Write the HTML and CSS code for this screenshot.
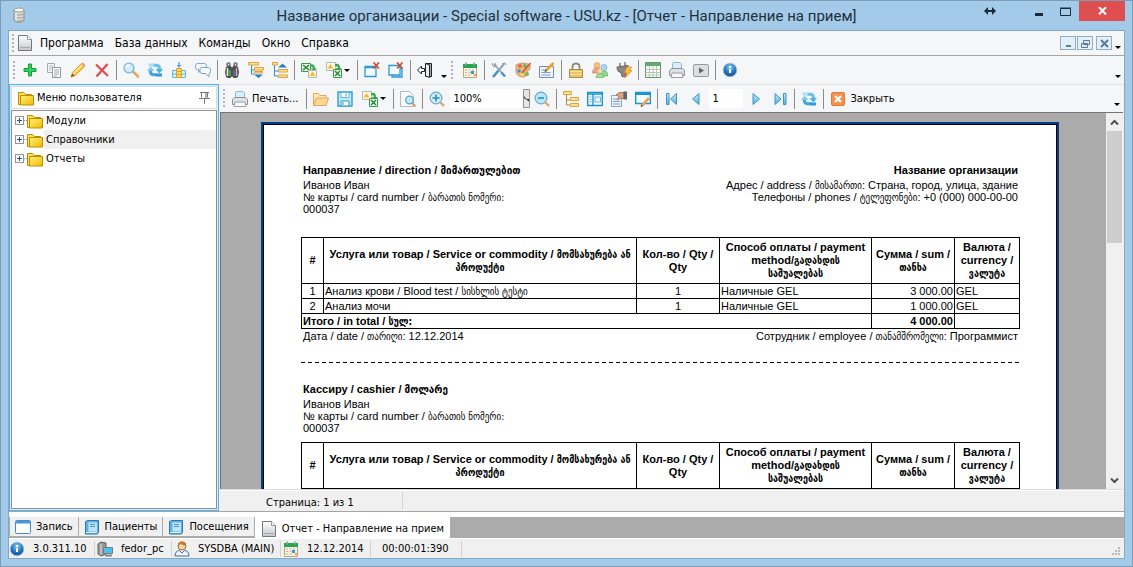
FILE: index.html
```html
<!DOCTYPE html>
<html lang="ru">
<head>
<meta charset="utf-8">
<title>Название организации - Special software - USU.kz</title>
<link rel="stylesheet" href="styles.css">
</head>
<body>
<svg class="defs" aria-hidden="true">
  <defs>
    <linearGradient id="g-gold" x1="0" y1="0" x2="1" y2="1"><stop offset="0" stop-color="#fff27a"/><stop offset="1" stop-color="#f2b800"/></linearGradient>
    <linearGradient id="g-blue" x1="0" y1="0" x2="0" y2="1"><stop offset="0" stop-color="#c5ecfb"/><stop offset="1" stop-color="#4db4e2"/></linearGradient>
    <radialGradient id="g-ball" cx=".5" cy=".3" r=".7"><stop offset="0" stop-color="#8fd0f5"/><stop offset=".5" stop-color="#2d83c9"/><stop offset="1" stop-color="#0c4a8c"/></radialGradient>
    <linearGradient id="g-gray" x1="0" y1="0" x2="0" y2="1"><stop offset="0" stop-color="#fff"/><stop offset="1" stop-color="#c4c8cc"/></linearGradient>
  </defs>
  <symbol id="db" viewBox="0 0 16 16"><path d="M3 3v10c0 1.400 2.300 2.300 5 2.300s5-.9 5-2.300V3" fill="#d9d9d6" stroke="#8c8c88"/><ellipse cx="8" cy="3" rx="5" ry="2" fill="#fafafa" stroke="#9a9a96"/><path d="M3 6.500c1 2 9 2 10 0M3 9.500c1 2 9 2 10 0M3 12.500c1 2 9 2 10 0" fill="none" stroke="#9c9c98"/><path d="M5 6v8" stroke="#fff"/></symbol>
  <symbol id="doc" viewBox="0 0 16 16"><path d="M1.500.5h9l4 4v11h-13z" fill="url(#g-gray)" stroke="#777"/><path d="M10.500.5v4h4" fill="#fff" stroke="#999"/><path d="M3 12.500h10" stroke="#aaa"/></symbol>
  <symbol id="plus" viewBox="0 0 16 16"><path d="M6.500 2h3v4.500H14v3H9.500V14h-3V9.500H2v-3h4.500z" fill="#2fd05d" stroke="#12a03c"/></symbol>
  <symbol id="copy" viewBox="0 0 16 16"><path d="M1.500 1.500h7v9h-7z" fill="#f6f6f6" stroke="#aaa"/><path d="M3 4h4M3 6h3M3 8h2" stroke="#bbb"/><path d="M6.500 5.500h8v10h-8z" fill="#fafafa" stroke="#999"/><path d="M8 8h5M8 10h5M8 12h5M8 14h3" stroke="#aaa"/></symbol>
  <symbol id="pencil" viewBox="0 0 16 16"><path d="M1 15l1.500-4.500L11.500 1.500q2-1 3 1t-1 3L5 13.500z" fill="#ffc93c" stroke="#e09a20"/><path d="M3 12l9-9" stroke="#fff0a8" stroke-width="1.500"/><path d="M1 15l1.300-3.500 2.200 2.200z" fill="#85501f"/><path d="M11.500 1.500q2-1 3 1t-1 3z" fill="#ef9c88"/></symbol>
  <symbol id="cross" viewBox="0 0 16 16"><path d="M2 2.500l12 11.500M13.500 2L2.500 14.500" stroke="#e8484c" stroke-width="2.200" fill="none"/></symbol>
  <symbol id="search" viewBox="0 0 16 16"><path d="M10 9.500l5 5" stroke="#e8a45e" stroke-width="2.600" stroke-linecap="round"/><circle cx="6" cy="6" r="4.900" fill="#d2edfb" stroke="#7fb8de" stroke-width="1.400"/><path d="M3 6a3 3 0 013-3" stroke="#fff" stroke-width="1.400" fill="none"/></symbol>
  <symbol id="refresh" viewBox="0 0 16 16"><path d="M6 3.200h3q3.700 0 3.700 4" fill="none" stroke="#6cc0ec" stroke-width="3"/><path d="M8.500 7h7.500l-3.700 4.500z" fill="#4db1e4"/><path d="M10 12.800H7q-3.700 0-3.700-4" fill="none" stroke="#3fa5dc" stroke-width="3"/><path d="M0 9h7.500L3.700 4.500z" fill="#7fcaf0"/><path d="M1 1.500h6v3H2z" fill="#a9dcf5"/><path d="M9 11.500h6v3H9z" fill="#2f9ad6"/></symbol>
  <symbol id="column" viewBox="0 0 16 16"><path d="M1.500 8.500h4v7h-4zM10.500 8.500h4v7h-4zM1.500 12h4M10.500 12h4" fill="#dff2fc" stroke="#63b4df"/><path d="M5.500 6.500h5v9h-5zM5.500 9.500h5M5.500 12.500h5" fill="#ffd85a" stroke="#d9a32b"/><path d="M8 0v4" stroke="#63a8d8" stroke-width="1.500"/><path d="M5.500 3h5L8 6z" fill="#63a8d8"/></symbol>
  <symbol id="chat" viewBox="0 0 16 16"><path d="M2.500 1.500h7q2 0 2 2v2q0 2-2 2h-4l-2 3v-3h-1q-2 0-2-2v-2q0-2 2-2z" fill="#eef6fb" stroke="#86a8c4"/><path d="M6.500 5.500h7q2 0 2 2v2q0 2-1.500 2v3.500l-3-3.500H7q-2 0-2-2V7.500q0-2 1.500-2z" fill="#f5fafd" stroke="#7fa8c8"/></symbol>
  <symbol id="binoc" viewBox="0 0 16 16"><path d="M2 5l2-1h3l1 2 1-2h3l2 1 1 5-1 5-2 1H9.500L8 14l-1.500 2H4l-2-1-1-5z" fill="#4c4c4c"/><circle cx="4.500" cy="2.500" r="2.200" fill="#666"/><circle cx="11.500" cy="2.500" r="2.200" fill="#666"/><circle cx="4.500" cy="2.500" r=".9" fill="#ddd"/><circle cx="11.500" cy="2.500" r=".9" fill="#ddd"/><path d="M3.500 6v8" stroke="#e8e8e8" stroke-width="1.600"/><path d="M6 8v6" stroke="#35b02e" stroke-width="2"/><path d="M10 8v6" stroke="#7a5bc0" stroke-width="1.600"/><path d="M12.500 6v8" stroke="#bdbdbd" stroke-width="1.400"/></symbol>
  <symbol id="tree" viewBox="0 0 16 16"><path d="M3.500 3v11h4M3.500 9h4" fill="none" stroke="#b98a2c"/><path d="M.5.500h8v3h-8zM7.500 6.500h8v3h-8zM7.500 12.500h8v3h-8z" fill="#ffdf95" stroke="#e0a43c"/></symbol>
  <symbol id="treedown" viewBox="0 0 16 16"><path d="M3.500 3v9h3M3.500 8h3" fill="none" stroke="#2f8ed0"/><path d="M.5.500h10v2.500h-10zM6.500 5.500h9v2.500h-9zM6.500 9.500h8V11h-8z" fill="#ffdf95" stroke="#e0a43c"/><path d="M6 12.500h9L10.500 16z" fill="#287fc0"/></symbol>
  <symbol id="treeup" viewBox="0 0 16 16"><path d="M2.500 2v12h4M2.500 9h4" fill="none" stroke="#2f8ed0"/><path d="M.5.500h5V3h-5zM6.500 7.500h9V10h-9zM6.500 13h9v2.500h-9z" fill="#ffdf95" stroke="#e0a43c"/><path d="M6 5.500h9L10.500 1.500z" fill="#287fc0"/></symbol>
  <symbol id="xlout" viewBox="0 0 16 16"><path d="M.5 1.500h9v8h-9z" fill="#eaf6ea" stroke="#3b9a4a"/><path d="M2 3l6 5M8 3L2 8" stroke="#24893a" stroke-width="1.600"/><path d="M9 2.500q5-1 5 4h2l-3 2.500-3.500-2.500H12q0-2-3-2z" fill="#36a84c"/><path d="M7.500 8.500h8v7h-8z" fill="#fff6dc" stroke="#b8b8b8"/><path d="M11.500 9.500l3 4.500h-6z" fill="#f7b731"/></symbol>
  <symbol id="xlin" viewBox="0 0 16 16"><path d="M.5.500h9v8h-9z" fill="#fff8e4" stroke="#b8b8b8"/><path d="M4.500 2l3 4.500h-6z" fill="#f7b731"/><path d="M9 2q5-1 5 4h2l-3 2-3.500-2H12q0-2-3-2z" fill="#36a84c"/><path d="M7.500 7.500h8v8h-8z" fill="#eaf6ea" stroke="#3b9a4a"/><path d="M9 9l5 5M14 9l-5 5" stroke="#24893a" stroke-width="1.500"/></symbol>
  <symbol id="winx" viewBox="0 0 16 16"><path d="M1 4.500h11v10H1z" fill="#f4fbff" stroke="#2c9ad4" stroke-width="1.300"/><path d="M1 5.500h11" stroke="#2c9ad4" stroke-width="1.500"/><path d="M9.500.5l5.500 6M15 .5l-5.500 6" stroke="#d6492f" stroke-width="1.700"/></symbol>
  <symbol id="winsx" viewBox="0 0 16 16"><path d="M4 6.500h10v8.500H4z" fill="#d4effb" stroke="#2c9ad4" stroke-width="1.300"/><path d="M1 3.500h11v9.500H1z" fill="#f4fbff" stroke="#2c9ad4" stroke-width="1.300"/><path d="M9 .5l5.500 6M14.500 .5L9 6.500" stroke="#d6492f" stroke-width="1.700"/></symbol>
  <symbol id="door" viewBox="0 0 16 16"><path d="M8.500 1.500h6v13h-6" fill="#aaa" stroke="#222"/><path d="M8.500 1.500l4 1.500v12.500l-4-1.500z" fill="#eee" stroke="#222"/><path d="M.5 8l4-4v2.500h3v3h-3V12z" fill="#fff" stroke="#222"/></symbol>
  <symbol id="cal" viewBox="0 0 16 16"><path d="M1.500 4.500h13v11h-13z" fill="#f7f2df" stroke="#b9a77a"/><path d="M1 2h14v4H1z" fill="#29a352"/><path d="M4 .5v3M12 .5v3" stroke="#77b58b" stroke-width="1.600"/><path d="M3 8h10M3 10.500h10M3 13h7" stroke="#c6b88c" stroke-dasharray="2 1.500"/><path d="M9 9h3v3H9z" fill="#3c92dc"/><path d="M12 12h2v2h-2z" fill="#f0a030"/></symbol>
  <symbol id="tools" viewBox="0 0 16 16"><path d="M3 2l10.500 12" stroke="#8fa4b4" stroke-width="1.600"/><path d="M13 2L8 8" stroke="#8fa4b4" stroke-width="2"/><path d="M7.500 8.500L2 15" stroke="#3f95d0" stroke-width="2.600"/><path d="M10.500 10.500l3.500 4" stroke="#3f95d0" stroke-width="2.400"/><path d="M1 1l1 3 2 1 1-2-1-2M11 2l3-1 1 2" stroke="#899" fill="none"/></symbol>
  <symbol id="palette" viewBox="0 0 16 16"><path d="M1 3q7-4 14 0 1 5-3 6 1 5-3 6-8 0-8-6z" fill="#e9b57d" stroke="#cf9a64"/><circle cx="5" cy="4" r="1.800" fill="#e85b4c"/><circle cx="10" cy="4" r="1.700" fill="#5bb45a"/><circle cx="4" cy="9" r="1.700" fill="#4c89d6"/><circle cx="7" cy="12.500" r="1.600" fill="#f5e14a"/><path d="M15.500 1L7 11" stroke="#c4603a" stroke-width="1.600"/><circle cx="12" cy="12" r="2" fill="#6cb95f"/></symbol>
  <symbol id="form" viewBox="0 0 16 16"><path d="M.5 4.500h14v11H.5z" fill="#f1f5fb" stroke="#6f8fba"/><path d="M2.500 8h6M2.500 10.500h9M2.500 13h9" stroke="#7b9bc4"/><path d="M7 8.500L14.500 1" stroke="#e3a72f" stroke-width="2.600"/><path d="M5.500 10l1-2.500 1.500 1.500z" fill="#333"/></symbol>
  <symbol id="lock" viewBox="0 0 16 16"><path d="M4.500 8V4.500q0-3 3.500-3t3.500 3V8" fill="none" stroke="#8c8c86" stroke-width="1.800"/><path d="M1.500 7.500h13v8h-13z" fill="#e8c36a" stroke="#b58c34"/><path d="M2 9.500h12M2 12.500h12" stroke="#f6dfa0"/></symbol>
  <symbol id="users" viewBox="0 0 16 16"><circle cx="5" cy="3.500" r="3" fill="#f5c489" stroke="#dfa05c" stroke-width=".7"/><path d="M.5 11q0-5 4.500-5t4.500 5z" fill="#f4a28d" stroke="#dd7d66" stroke-width=".7"/><circle cx="12" cy="5.500" r="3" fill="#a9d8f4" stroke="#70b2da" stroke-width=".7"/><path d="M8 14q0-5 4-5t4 5z" fill="#8fd88a" stroke="#62b45c" stroke-width=".7"/><circle cx="8" cy="9" r="2.200" fill="#f7e6ac" stroke="#e0c070" stroke-width=".6"/><path d="M4 15.500q0-4 4-4t4 4z" fill="#a4e09c" stroke="#62b45c" stroke-width=".7"/></symbol>
  <symbol id="plug" viewBox="0 0 16 16"><path d="M4 1v5M9 0v5" stroke="#9c9c9c" stroke-width="2"/><path d="M1 5l11-1.500q1 5-2 6.500l-1 5-3-.5-1-4Q1 10 1 5z" fill="#8b8884" stroke="#676460"/><path d="M11 5l4.500 0-2 3.500H16L9.500 15.500l1.500-5H8.500z" fill="#ffc33c" stroke="#e58a1c" stroke-width=".8"/></symbol>
  <symbol id="grid" viewBox="0 0 16 16"><path d="M.5.500h15v15H.5z" fill="#fff" stroke="#5f9168"/><path d="M.5.500h15V4H.5z" fill="#66a870"/><path d="M.5 7.500h15M.5 10.500h15M.5 13h15M4.500 4v11M8 4v11M11.500 4v11" stroke="#b3c8b3"/></symbol>
  <symbol id="printer" viewBox="0 0 16 16"><path d="M3.500 7V1.500L5 .5h6l1.500 1.500V7" fill="#d9effc" stroke="#8db8d4"/><path d="M.5 8.500l2-2h11l2 2v5H.5z" fill="#dfe0e3" stroke="#8d9096"/><path d="M3 11h10l1 4.500H2z" fill="#f8f8f8" stroke="#9b9ea4"/></symbol>
  <symbol id="play" viewBox="0 0 16 16"><rect x=".5" y="2.500" width="15" height="12" rx="1.500" fill="#dcdfe0" stroke="#969b9d"/><path d="M6 5.500v6L11 8.500z" fill="#59676d"/></symbol>
  <symbol id="info" viewBox="0 0 16 16"><circle cx="8" cy="8" r="6.800" fill="url(#g-ball)" stroke="#9fbfdc" stroke-width=".8"/><path d="M8 4v2" stroke="#fff" stroke-width="2"/><path d="M8 7v4" stroke="#fff" stroke-width="2"/></symbol>
  <symbol id="folder" viewBox="0 0 16 16"><path d="M.5 2.500h5l2 2h6v3h-9l-1 7H.5z" fill="#ffe04a" stroke="#b98d00"/><path d="M2.500 5.500h13v9.500h-13z" fill="url(#g-gold)" stroke="#bd8f00"/></symbol>
  <symbol id="open" viewBox="0 0 16 16"><path d="M.5 14.500v-12h5l1.500 2h6v3" fill="#ffe6b5" stroke="#e2a75a"/><path d="M.5 14.500l3-7.500h12l-2.500 7.500z" fill="#ffd795" stroke="#e2a75a"/></symbol>
  <symbol id="save" viewBox="0 0 16 16"><path d="M1 1h14v14H1z" fill="#bfe7f9" stroke="#2d9fd2" stroke-width="1.400"/><path d="M4 1.500h8v5H4z" fill="#fff" stroke="#68b9df"/><path d="M4 10h8v5H4z" fill="#f7fcff" stroke="#3a9cc9"/><path d="M6 11v3M9 2.500v3" stroke="#3a9cc9"/></symbol>
  <symbol id="preview" viewBox="0 0 16 16"><path d="M.5.500h9l4 4v11H.5z" fill="#fbfbfb" stroke="#b8b8b8"/><path d="M12 12l3.500 3.500" stroke="#d59a5c" stroke-width="2"/><circle cx="9.500" cy="9" r="3.800" fill="#c8e9f9" stroke="#4fa8d4" stroke-width="1.300"/></symbol>
  <symbol id="zin" viewBox="0 0 16 16"><path d="M11.500 11.500l3.500 3.500" stroke="#dba468" stroke-width="2.400"/><circle cx="7" cy="7" r="5.900" fill="#cfeefa" stroke="#73a9c4" stroke-width="1.200"/><path d="M7 3.500v7M3.500 7h7" stroke="#2d8dc0" stroke-width="1.600"/></symbol>
  <symbol id="zout" viewBox="0 0 16 16"><path d="M11.500 11.500l3.500 3.500" stroke="#dba468" stroke-width="2.400"/><circle cx="7" cy="7" r="5.900" fill="#b9e6f9" stroke="#73a9c4" stroke-width="1.200"/><path d="M4 7h6" stroke="#2d8dc0" stroke-width="1.600"/></symbol>
  <symbol id="panels" viewBox="0 0 16 16"><path d="M.7 1.500h14.600v13H.7z" fill="#f2fbff" stroke="#1d94cf" stroke-width="1.400"/><path d="M.7 3h14.600M6 3v11" stroke="#1d94cf" stroke-width="1.400"/><path d="M2.500 6h2M2.500 8.500h2M2.500 11h2M8 6h5.500v5H8z" stroke="#68b7dc" fill="none"/></symbol>
  <symbol id="hand" viewBox="0 0 16 16"><path d="M.5 4.500h10v11H.5z" fill="#eef4fb" stroke="#88a4cc"/><path d="M2 8h4M2 10.500h7M2 13h7" stroke="#7f9dcc"/><path d="M5 4l3-2.500h5v6H9L7.500 9 6 8.500 8 5.500z" fill="#d6a482" stroke="#9b7357" stroke-width=".8"/><path d="M12.500.5H16v8h-3.500z" fill="#666"/></symbol>
  <symbol id="winedit" viewBox="0 0 16 16"><path d="M.7 1.500h14.600v11H.7z" fill="#f4fbff" stroke="#1d94cf" stroke-width="1.400"/><path d="M.7 3h14.600" stroke="#1d94cf" stroke-width="2"/><path d="M6.500 15L14 7" stroke="#eba35c" stroke-width="2.800"/><path d="M5.500 16l.8-2.500 1.600 1.500z" fill="#444"/></symbol>
  <symbol id="first" viewBox="0 0 16 16"><path d="M2.500 2.500H5v11H2.500zM12.500 2.500v11L6.500 8z" fill="url(#g-blue)" stroke="#4294bf"/></symbol>
  <symbol id="prev" viewBox="0 0 16 16"><path d="M11 2.500v11L4.500 8z" fill="url(#g-blue)" stroke="#4294bf"/></symbol>
  <symbol id="next" viewBox="0 0 16 16"><path d="M5 2.500v11L11.500 8z" fill="url(#g-blue)" stroke="#4294bf"/></symbol>
  <symbol id="last" viewBox="0 0 16 16"><path d="M11.500 2.500H14v11h-2.500zM3 2.500v11L9 8z" fill="url(#g-blue)" stroke="#4294bf"/></symbol>
  <symbol id="close" viewBox="0 0 16 16"><rect x="1.500" y="1.500" width="13" height="13" rx="1.500" fill="#f5914a" stroke="#e07b32"/><path d="M5 5l6 6M11 5l-6 6" stroke="#fff" stroke-width="2.200"/></symbol>
  <symbol id="pin" viewBox="0 0 16 16"><path d="M4 2.500h9M5.500 3v4.500M11.500 3v4.500M3 8.500h11M8.500 9v5" fill="none" stroke="#777"/><path d="M10 3v5" stroke="#999" stroke-width="1.500"/></symbol>
  <symbol id="window" viewBox="0 0 16 16"><rect x=".5" y="1.500" width="15" height="13" rx="1" fill="#fbfeff" stroke="#4a8cc8"/><path d="M1 2h14v2.500H1z" fill="#4b97dd"/></symbol>
  <symbol id="book" viewBox="0 0 16 16"><path d="M1.500 2.500l2-1h11v12l-1 1.500h-12z" fill="#5fb1e4" stroke="#2b78b4"/><path d="M4.500 3.500h8.500v9H4.500z" fill="#bfe4f7"/><path d="M6 5.500h5M6 7.500h5" stroke="#4a98cd"/><path d="M2 13.500h11" stroke="#e6f5fd"/></symbol>
  <symbol id="pc" viewBox="0 0 16 16"><path d="M1 3l3-2 5 1v11l-5 2-3-2z" fill="#9a9a96" stroke="#5e5e5a"/><path d="M4 3v11" stroke="#ddd"/><path d="M6.500 6.500h9v6h-9z" fill="#4cc0f2" stroke="#7b7b7b"/><path d="M8 14.500h7" stroke="#888" stroke-width="2"/></symbol>
  <symbol id="person" viewBox="0 0 16 16"><circle cx="8" cy="5" r="4" fill="#ffd9a8" stroke="#a86420"/><path d="M4 4.500q0-4 4-4t4 4q-4 0-5-2-1 2-3 2z" fill="#c9782a"/><path d="M1 15q0-5 4.500-5.500L8 12l2.500-2.500Q15 10 15 15z" fill="#eaf2fb" stroke="#4369a8"/></symbol>
</svg>

<div class="window">
  <header class="titlebar">
    <svg class="icon app-icon"><use href="#db"/></svg>
    <h1 class="title">Название организации - Special software - USU.kz - [Отчет - Направление на прием]</h1>
    <div class="window-buttons">
      <button class="wbtn wbtn-wide" aria-label="Переместить"><svg width="12" height="8"><path d="M0 4l4-4v3h4V0l4 4-4 4V5H4v3z" fill="#1b2a38"/></svg></button>
      <button class="wbtn" aria-label="Свернуть"><svg width="10" height="12"><path d="M1 8h8v3H1z" fill="#1b2a38"/></svg></button>
      <button class="wbtn" aria-label="Развернуть"><svg width="11" height="9"><path d="M.5 1.500h10v7H.5zM0 1h11" fill="none" stroke="#1b2a38"/></svg></button>
      <button class="wbtn wbtn-close" aria-label="Закрыть окно"><svg width="9" height="8"><path d="M1 0l7 7.500M8 0L1 7.500" stroke="#fff" stroke-width="2"/></svg></button>
    </div>
  </header>

  <div class="client">
    <nav class="menubar">
      <span class="grip"></span>
      <svg class="icon doc-icon"><use href="#doc"/></svg>
      <button class="menu">Программа</button><button class="menu">База данных</button><button class="menu">Команды</button><button class="menu">Окно</button><button class="menu">Справка</button>
      <div class="mdi-buttons">
        <button class="mbtn" aria-label="Свернуть отчет"><svg width="9" height="9"><path d="M2 6h5v2H2z" fill="#5d7a94"/></svg></button>
        <button class="mbtn" aria-label="Восстановить отчет"><svg width="9" height="9"><path d="M2.500 1.500h6v4h-6zM.5 4.500h6v4h-6z" fill="#dbeaf5" stroke="#5d7a94"/></svg></button>
        <button class="mbtn mbtn-close" aria-label="Закрыть отчет"><svg width="9" height="9"><path d="M1 1l7 7M8 1L1 8" stroke="#5d7a94" stroke-width="2"/></svg></button>
      </div>
      <button class="overflow" aria-label="Параметры меню"></button>
    </nav>

    <div class="toolbar">
      <span class="grip"></span>
      <button class="tool" aria-label="Добавить"><svg class="icon"><use href="#plus"/></svg></button>
      <button class="tool" aria-label="Копировать"><svg class="icon"><use href="#copy"/></svg></button>
      <button class="tool" aria-label="Изменить"><svg class="icon"><use href="#pencil"/></svg></button>
      <button class="tool" aria-label="Удалить"><svg class="icon"><use href="#cross"/></svg></button>
      <span class="sep"></span>
      <button class="tool" aria-label="Поиск"><svg class="icon"><use href="#search"/></svg></button>
      <button class="tool" aria-label="Обновить"><svg class="icon"><use href="#refresh"/></svg></button>
      <button class="tool" aria-label="Столбцы"><svg class="icon"><use href="#column"/></svg></button>
      <button class="tool" aria-label="Сообщения"><svg class="icon"><use href="#chat"/></svg></button>
      <span class="sep"></span>
      <button class="tool" aria-label="Найти"><svg class="icon"><use href="#binoc"/></svg></button>
      <button class="tool" aria-label="Развернуть все"><svg class="icon"><use href="#treedown"/></svg></button>
      <button class="tool" aria-label="Свернуть все"><svg class="icon"><use href="#treeup"/></svg></button>
      <span class="sep"></span>
      <button class="tool" aria-label="Экспорт"><svg class="icon"><use href="#xlout"/></svg></button>
      <button class="tool tool-drop" aria-label="Импорт"><svg class="icon"><use href="#xlin"/></svg><span class="caret"></span></button>
      <span class="sep"></span>
      <button class="tool" aria-label="Закрыть вкладку"><svg class="icon"><use href="#winx"/></svg></button>
      <button class="tool" aria-label="Закрыть все вкладки"><svg class="icon"><use href="#winsx"/></svg></button>
      <span class="sep"></span>
      <button class="tool" aria-label="Выход"><svg class="icon"><use href="#door"/></svg></button>
      <button class="overflow" aria-label="Параметры панели"></button>
      <span class="grip grip-mid"></span>
      <button class="tool" aria-label="Календарь"><svg class="icon"><use href="#cal"/></svg></button>
      <span class="sep"></span>
      <button class="tool" aria-label="Настройки"><svg class="icon"><use href="#tools"/></svg></button>
      <button class="tool" aria-label="Оформление"><svg class="icon"><use href="#palette"/></svg></button>
      <button class="tool" aria-label="Форма"><svg class="icon"><use href="#form"/></svg></button>
      <span class="sep"></span>
      <button class="tool" aria-label="Блокировка"><svg class="icon"><use href="#lock"/></svg></button>
      <button class="tool" aria-label="Пользователи"><svg class="icon"><use href="#users"/></svg></button>
      <button class="tool" aria-label="Подключение"><svg class="icon"><use href="#plug"/></svg></button>
      <span class="sep"></span>
      <button class="tool" aria-label="Таблица"><svg class="icon"><use href="#grid"/></svg></button>
      <button class="tool" aria-label="Принтер"><svg class="icon"><use href="#printer"/></svg></button>
      <button class="tool" aria-label="Видео"><svg class="icon"><use href="#play"/></svg></button>
      <span class="sep"></span>
      <button class="tool" aria-label="О программе"><svg class="icon"><use href="#info"/></svg></button>
      <button class="overflow overflow-end" aria-label="Параметры панелей"></button>
    </div>

    <div class="workspace">
      <aside class="sidebar">
        <div class="side-head">
          <svg class="icon"><use href="#folder"/></svg>
          <h2 class="side-title">Меню пользователя</h2>
          <button class="pin" aria-label="Закрепить"><svg class="icon"><use href="#pin"/></svg></button>
        </div>
        <ul class="tree">
          <li class="node"><button class="expander" aria-label="Развернуть Модули"></button><span class="twig"></span><svg class="icon"><use href="#folder"/></svg><span class="node-label">Модули</span></li>
          <li class="node"><button class="expander" aria-label="Развернуть Справочники"></button><span class="twig"></span><svg class="icon"><use href="#folder"/></svg><span class="node-label node-selected">Справочники</span></li>
          <li class="node"><button class="expander" aria-label="Развернуть Отчеты"></button><span class="twig"></span><svg class="icon"><use href="#folder"/></svg><span class="node-label">Отчеты</span></li>
        </ul>
      </aside>

      <main class="report">
        <div class="toolbar toolbar-report">
          <span class="grip"></span>
          <button class="tool tool-text"><svg class="icon"><use href="#printer"/></svg>Печать...</button>
          <span class="sep"></span>
          <button class="tool" aria-label="Открыть"><svg class="icon"><use href="#open"/></svg></button>
          <button class="tool" aria-label="Сохранить"><svg class="icon"><use href="#save"/></svg></button>
          <button class="tool tool-drop" aria-label="Экспорт отчета"><svg class="icon"><use href="#xlin"/></svg><span class="caret"></span></button>
          <span class="sep"></span>
          <button class="tool" aria-label="Просмотр"><svg class="icon"><use href="#preview"/></svg></button>
          <span class="sep"></span>
          <button class="tool" aria-label="Увеличить"><svg class="icon"><use href="#zin"/></svg></button>
          <span class="zoom"><select class="zoom-select" aria-label="Масштаб"><option>100%</option><option>200%</option></select><svg class="zoom-arrow" width="7" height="19"><path d="M.5.500h6v18h-6z" fill="#e6e6e6" stroke="#8f8f8f"/><path d="M1 7l2.500 3L6 10v2.500L1 9z" fill="#333"/></svg></span>
          <button class="tool" aria-label="Уменьшить"><svg class="icon"><use href="#zout"/></svg></button>
          <span class="sep"></span>
          <button class="tool" aria-label="Структура"><svg class="icon"><use href="#tree"/></svg></button>
          <button class="tool" aria-label="Миниатюры"><svg class="icon"><use href="#panels"/></svg></button>
          <button class="tool" aria-label="Параметры страницы"><svg class="icon"><use href="#hand"/></svg></button>
          <button class="tool" aria-label="Редактировать"><svg class="icon"><use href="#winedit"/></svg></button>
          <span class="sep"></span>
          <button class="tool" aria-label="Первая страница"><svg class="icon"><use href="#first"/></svg></button>
          <button class="tool" aria-label="Предыдущая страница"><svg class="icon"><use href="#prev"/></svg></button>
          <input class="page-input" type="text" value="1" aria-label="Номер страницы">
          <button class="tool" aria-label="Следующая страница"><svg class="icon"><use href="#next"/></svg></button>
          <button class="tool" aria-label="Последняя страница"><svg class="icon"><use href="#last"/></svg></button>
          <span class="sep"></span>
          <button class="tool" aria-label="Обновить отчет"><svg class="icon"><use href="#refresh"/></svg></button>
          <span class="sep"></span>
          <button class="tool tool-text"><svg class="icon"><use href="#close"/></svg>Закрыть</button>
          <button class="overflow overflow-end" aria-label="Параметры панели отчета"></button>
        </div>

        <div class="preview">
          <div class="canvas">
            <article class="sheet">
              <section class="slip">
                <div class="slip-head">
                  <div>
                    <h3 class="slip-title">Направление / direction / <span class="geo">მიმართულებით</span></h3>
                    <p class="line">Иванов Иван</p>
                    <p class="line">№ карты / card number / <span class="geo">ბარათის ნომერი:</span></p>
                    <p class="line">000037</p>
                  </div>
                  <div class="org">
                    <h3 class="slip-title">Название организации</h3>
                    <p class="line">Адрес / address / <span class="geo">მისამართი</span>: Страна, город, улица, здание</p>
                    <p class="line">Телефоны / phones / <span class="geo">ტელეფონები</span>: +0 (000) 000-00-00</p>
                  </div>
                </div>
                <table class="items items-first">
                  <colgroup><col class="c-num"><col><col class="c-qty"><col class="c-pay"><col class="c-sum"><col class="c-cur"></colgroup>
                  <thead><tr><th>#</th><th>Услуга или товар / Service or commodity / <span class="geo">მომსახურება ან</span><br><span class="geo">პროდუქტი</span></th><th>Кол-во / Qty / Qty</th><th>Способ оплаты / payment method/<span class="geo">გადახდის</span><br><span class="geo">საშუალებას</span></th><th>Сумма / sum / <span class="geo">თანხა</span></th><th>Валюта / currency / <span class="geo">ვალუტა</span></th></tr></thead>
                  <tbody>
                    <tr><td class="mid">1</td><td>Анализ крови / Blood test / <span class="geo">სისხლის ტესტი</span></td><td class="mid">1</td><td>Наличные GEL</td><td class="num">3 000.00</td><td>GEL</td></tr>
                    <tr><td class="mid">2</td><td>Анализ мочи</td><td class="mid">1</td><td>Наличные GEL</td><td class="num">1 000.00</td><td>GEL</td></tr>
                    <tr class="total"><td colspan="4">Итого / in total / <span class="geo">სულ:</span></td><td class="num">4 000.00</td><td></td></tr>
                  </tbody>
                </table>
                <div class="slip-foot"><p class="line">Дата / date / <span class="geo">თარიღი</span>: 12.12.2014</p><p class="line">Сотрудник / employee / <span class="geo">თანამშრომელი</span>: Программист</p></div>
              </section>
              <div class="cut"></div>
              <section class="slip">
                <h3 class="slip-title">Кассиру / cashier / <span class="geo">მოლარე</span></h3>
                <p class="line">Иванов Иван</p>
                <p class="line">№ карты / card number / <span class="geo">ბარათის ნომერი:</span></p>
                <p class="line">000037</p>
                <table class="items items-second">
                  <colgroup><col class="c-num"><col><col class="c-qty"><col class="c-pay"><col class="c-sum"><col class="c-cur"></colgroup>
                  <thead><tr><th>#</th><th>Услуга или товар / Service or commodity / <span class="geo">მომსახურება ან</span><br><span class="geo">პროდუქტი</span></th><th>Кол-во / Qty / Qty</th><th>Способ оплаты / payment method/<span class="geo">გადახდის</span><br><span class="geo">საშუალებას</span></th><th>Сумма / sum / <span class="geo">თანხა</span></th><th>Валюта / currency / <span class="geo">ვალუტა</span></th></tr></thead>
                  <tbody>
                    <tr><td></td><td></td><td></td><td></td><td></td><td></td></tr>
                  </tbody>
                </table>
              </section>
            </article>
          </div>
          <div class="scrollbar">
            <button class="scroll-btn" aria-label="Вверх"><svg width="9" height="7"><path d="M1 5.500l3.500-3.500L8 5.500" fill="none" stroke="#505050" stroke-width="2"/></svg></button>
            <div class="scroll-thumb"></div>
            <button class="scroll-btn scroll-down" aria-label="Вниз"><svg width="9" height="7"><path d="M1 1.500L4.500 5 8 1.500" fill="none" stroke="#505050" stroke-width="2"/></svg></button>
          </div>
        </div>
        <div class="page-status"><span class="page-count">Страница: 1 из 1</span></div>
      </main>
    </div>

    <div class="tabs">
      <button class="tab"><svg class="icon"><use href="#window"/></svg>Запись</button>
      <button class="tab"><svg class="icon"><use href="#book"/></svg>Пациенты</button>
      <button class="tab"><svg class="icon"><use href="#book"/></svg>Посещения</button>
      <button class="tab tab-active"><svg class="icon"><use href="#doc"/></svg>Отчет - Направление на прием</button>
    </div>

    <footer class="statusbar">
      <span class="cell cell-version"><svg class="icon"><use href="#info"/></svg>3.0.311.10</span>
      <span class="cell cell-pc"><svg class="icon"><use href="#pc"/></svg>fedor_pc</span>
      <span class="cell cell-user"><svg class="icon"><use href="#person"/></svg>SYSDBA (MAIN)</span>
      <span class="cell cell-date"><svg class="icon"><use href="#cal"/></svg>12.12.2014</span>
      <span class="cell cell-time">00:00:01:390</span>
      <svg class="size-grip" width="9" height="9"><path d="M6 0h2v2H6zM3 3h2v2H3zM6 3h2v2H6zM0 6h2v2H0zM3 6h2v2H3zM6 6h2v2H6z" fill="#b9b9b9"/></svg>
    </footer>
  </div>
</div>
</body>
</html>
```
FILE: styles.css
```css
* { box-sizing: border-box; }

body {
  margin: 0;
  font: 11px/14px "DejaVu Sans Condensed", "DejaVu Sans", sans-serif;
  color: #000;
}

h1, h2, h3, p, ul { margin: 0; padding: 0; font-size: inherit; font-weight: normal; }
ul { list-style: none; }

button, input, select {
  margin: 0;
  padding: 0;
  border: 0;
  background: none;
  font: inherit;
  color: inherit;
}

.defs { position: absolute; width: 0; height: 0; }
.icon { width: 16px; height: 16px; flex: none; }

.window {
  display: flex;
  flex-direction: column;
  height: 100vh;
  padding: 0 7px 7px;
  background: #a3cbe9;
  border: 1px solid #7b9db8;
}

/* Title bar */
.titlebar { display: flex; height: 29px; flex: none; }
.app-icon { margin: 6px 0 0 3px; }
.title {
  flex: 1;
  padding-left: 129px;
  text-align: center;
  font: 15px/30px Roboto, "Open Sans", sans-serif;
  color: #23303c;
  white-space: nowrap;
}
.window-buttons { display: flex; height: 20px; }
.wbtn { display: flex; align-items: center; justify-content: center; width: 27px; }
.wbtn-wide { width: 26px; margin-right: 22px; }
.wbtn-close { width: 46px; background: #e04f50; }

.client {
  display: flex;
  flex-direction: column;
  flex: 1;
  min-height: 0;
  background: #f0f0f0;
  border: 1px solid #86a9c3;
}

/* Menu and toolbars */
.menubar, .toolbar { display: flex; align-items: center; background: #f5f6f7; flex: none; }
.menubar { height: 25px; padding-left: 3px; border-bottom: 1px solid #a5a5a5; font-size: 12px; }
.toolbar { height: 28px; padding-left: 4px; }
.grip {
  width: 2px;
  height: 19px;
  flex: none;
  background: repeating-linear-gradient(#b5b5b5 0 2px, transparent 2px 4px);
}
.menubar .grip { margin-right: 3px; }
.doc-icon { margin-right: 1px; }
.menu { padding: 0 5px 0 6px; white-space: nowrap; }
.mdi-buttons { display: flex; gap: 1px; margin-left: auto; }
.mbtn {
  display: flex;
  align-items: center;
  justify-content: center;
  width: 16px;
  height: 14px;
  background: #e3f0fa;
  border: 1px solid #8eafc6;
}
.mbtn-close { margin-left: 2px; }
.overflow { display: flex; justify-content: center; align-self: flex-end; width: 14px; height: 9px; }
.overflow::after, .caret {
  content: "";
  display: block;
  width: 0;
  height: 0;
  border: 3px solid transparent;
  border-top-color: #000;
  border-bottom: 0;
}
.overflow-end { width: 12px; margin-left: auto; }
.menubar .overflow { width: 12px; }
.tool { display: flex; align-items: center; justify-content: center; width: 24px; height: 22px; flex: none; }
.toolbar > .grip + .tool { margin-left: 3px; }
.toolbar > .grip-mid + .tool { margin-left: 5px; }
.tool-drop { width: 34px; gap: 2px; }
.tool-text { width: auto; gap: 4px; padding: 0 6px 0 4px; white-space: nowrap; }
.sep { width: 1px; height: 20px; margin: 0 2px; background: #8a8a8a; flex: none; }

/* Workspace */
.workspace { display: flex; flex: 1; min-height: 0; }
.sidebar {
  display: flex;
  flex-direction: column;
  width: 210px;
  flex: none;
  border: 1px solid #53b4ea;
  box-shadow: inset 0 0 0 1px #d6eefb;
  background: #fff;
}
.side-head {
  display: flex;
  align-items: center;
  height: 23px;
  margin: 1px;
  padding: 0 4px 0 6px;
  border: 1px solid #dcdcdc;
}
.side-title { flex: 1; padding-left: 3px; }
.pin { display: flex; }
.tree { flex: 1; margin: 0 1px 1px; border: 1px solid #8b8f96; }
.node { display: flex; align-items: center; height: 19px; padding-left: 3px; }
.expander {
  width: 9px;
  height: 9px;
  flex: none;
  border: 1px solid #949494;
  background:
    linear-gradient(#2b4b9b, #2b4b9b) center / 5px 1px no-repeat,
    linear-gradient(#2b4b9b, #2b4b9b) center / 1px 5px no-repeat, #fff;
}
.twig { width: 3px; border-top: 1px dotted #999; }
.node-label { flex: 1; height: 19px; margin-left: 1px; padding-left: 2px; line-height: 19px; }
.node-selected { background: #f0f0f0; }

.report { display: flex; flex-direction: column; flex: 1; min-width: 0; padding: 0 1px; }
.toolbar-report { padding-left: 3px; border-top: 1px solid #e2e2e2; }
.zoom { position: relative; display: flex; width: 80px; height: 19px; margin-left: 1px; }
.zoom-select { appearance: none; width: 100%; padding-left: 3px; background: #fff; }
.zoom-arrow { position: absolute; top: 0; right: 0; pointer-events: none; }
.page-input { width: 34px; height: 19px; margin: 0 1px; padding-left: 3px; background: #fff; }

.preview {
  display: flex;
  flex: 1;
  min-height: 0;
  border: 1px solid #747474;
  border-width: 1px 0 0 1px;
  background: #ababab;
}
.canvas { flex: 1; min-width: 0; overflow: hidden; padding: 9px 47px 0 40px; }
.sheet {
  padding: 37px 37px 60px 38px;
  border: 2px solid #003f87;
  box-shadow: inset 0 0 0 1px #000;
  background: #fff;
  font: 11px/12px "Liberation Sans", Arial, "DejaVu Sans Condensed", sans-serif;
}
.geo { font-family: "DejaVu Sans Condensed", "DejaVu Sans", sans-serif; font-size: 10px; }
.slip-title .geo { font-size: 11px; }
.slip-head { display: flex; justify-content: space-between; padding: 0 2px; }
.org { text-align: right; }
.slip-title { height: 12px; margin: 3px 0; font-weight: bold; }
.line { height: 12px; white-space: nowrap; }
.items { width: 100%; border-collapse: collapse; table-layout: fixed; }
.items-first { margin-top: 22px; }
.items-second { margin-top: 8px; }
.items th, .items td { border: 1px solid #000; padding: 0 1px; }
.items th { height: 46px; font-weight: bold; line-height: 13px; text-align: center; }
.items td { height: 15px; text-align: left; white-space: nowrap; }
.items .mid { text-align: center; }
.items .num { text-align: right; }
.items .total td { font-weight: bold; }
.c-num { width: 22px; }
.c-qty { width: 83px; }
.c-pay { width: 152px; }
.c-sum { width: 83px; }
.c-cur { width: 65px; }
.slip-foot { display: flex; justify-content: space-between; padding: 1px 2px 0; }
.cut {
  height: 1px;
  margin: 20px 0;
  background: repeating-linear-gradient(90deg, #000 0 4px, transparent 4px 7px);
}
.cut + .slip > .slip-title, .cut + .slip > .line { padding-left: 2px; }

.scrollbar { display: flex; flex-direction: column; width: 17px; flex: none; background: #f0f0f0; }
.scroll-btn { display: flex; align-items: center; justify-content: center; height: 18px; flex: none; }
.scroll-thumb { flex: 0 1 112px; margin: 0 1px; background: #cdcdcd; }
.scroll-down { margin-top: auto; }

.page-status { display: flex; height: 22px; flex: none; border-top: 1px solid #dcdcdc; box-shadow: inset 0 1px #fff; }
.page-count { width: 183px; margin: 2px 0; padding-left: 46px; border-right: 1px solid #d4d4d4; line-height: 21px; }

/* Window tabs */
.tabs {
  display: flex;
  align-items: flex-start;
  gap: 1px;
  height: 27px;
  flex: none;
  padding-left: 1px;
  border-top: 1px solid #a5a5a5;
  background: linear-gradient(#fff 0 5px, #ababab 5px);
}
.tab {
  display: flex;
  align-items: center;
  gap: 5px;
  height: 19px;
  margin-top: 5px;
  padding: 0 5px;
  background: #f0f0f0;
  white-space: nowrap;
}
.tab-active { height: 21px; padding: 2px 6px 0; background: #fff; }

/* Status bar */
.statusbar { display: flex; align-items: center; height: 20px; flex: none; border-top: 1px solid #fff; background: #f0f0f0; }
.cell { display: flex; align-items: center; gap: 8px; height: 16px; border-right: 1px solid #d2d2d2; }
.cell-version { width: 86px; }
.cell-pc { width: 77px; padding-left: 2px; }
.cell-user { width: 109px; padding-left: 2px; }
.cell-date { width: 90px; padding-left: 2px; }
.cell-time { width: 91px; padding-left: 11px; }
.size-grip { margin: auto 3px 2px auto; }
```
